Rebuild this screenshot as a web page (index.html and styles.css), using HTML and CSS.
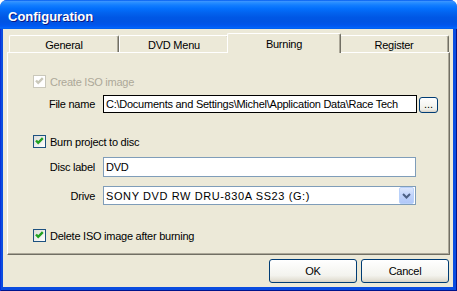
FILE: index.html
```html
<!DOCTYPE html>
<html lang="en">
<head>
    <meta charset="UTF-8">
    <title>Configuration</title>
    <link rel="stylesheet" href="styles.css">
</head>
<body>
<div class="window">
    <div class="titlebar"><span class="title">Configuration</span></div>
    <div class="frame">
        <div class="client">
            <div class="tabs">
                <div class="tab">General</div>
                <div class="tab">DVD Menu</div>
                <div class="tab active">Burning</div>
                <div class="tab">Register</div>
            </div>
            <div class="panel">
                <div class="check disabled row-iso">
                    <span class="box"><svg width="11" height="11" viewBox="0 0 11 11"><path d="M2 4.5 L4.2 6.8 L8.8 2.2" fill="none" stroke="#CAC8BB" stroke-width="2.4"/></svg></span>
                    <span class="check-text">Create ISO image</span>
                </div>
                <div class="field row-file">
                    <span class="label">File name</span>
                    <div class="input readonly">C:\Documents and Settings\Michel\Application Data\Race Tech</div>
                    <button class="browse">...</button>
                </div>
                <div class="check row-burn">
                    <span class="box"><svg width="11" height="11" viewBox="0 0 11 11"><path d="M2 4.5 L4.2 6.8 L8.8 2.2" fill="none" stroke="#21A121" stroke-width="2.4"/></svg></span>
                    <span class="check-text">Burn project to disc</span>
                </div>
                <div class="field row-label">
                    <span class="label">Disc label</span>
                    <div class="input">DVD</div>
                </div>
                <div class="field row-drive">
                    <span class="label">Drive</span>
                    <div class="input combo">
                        <span class="combo-text">SONY DVD RW DRU-830A SS23 (G:)</span>
                        <span class="combo-btn"><svg width="9" height="6" viewBox="0 0 9 6"><path d="M1 1 L4.5 4.5 L8 1" fill="none" stroke="#4D6185" stroke-width="2"/></svg></span>
                    </div>
                </div>
                <div class="check row-delete">
                    <span class="box"><svg width="11" height="11" viewBox="0 0 11 11"><path d="M2 4.5 L4.2 6.8 L8.8 2.2" fill="none" stroke="#21A121" stroke-width="2.4"/></svg></span>
                    <span class="check-text">Delete ISO image after burning</span>
                </div>
            </div>
            <div class="buttons">
                <button class="btn">OK</button>
                <button class="btn">Cancel</button>
            </div>
        </div>
    </div>
</div>
</body>
</html>
```

FILE: styles.css
```css
body {
    margin: 0;
    background-color: #ffffff;
    font-family: "Liberation Sans", Arial, sans-serif;
    font-size: 11px;
    letter-spacing: -0.25px;
    color: #000000;
}

.window {
    width: 457px;
    height: 291px;
    display: flex;
    flex-direction: column;
    border-radius: 7px 7px 0 0;
    overflow: hidden;
    background-color: #0A4CE0;
}

.titlebar {
    height: 29px;
    box-sizing: border-box;
    padding: 3px 0 0 8px;
    display: flex;
    align-items: center;
    background: linear-gradient(to bottom, #0058EE 0%, #3A93FF 5%, #288EFF 9%, #127DFF 18%, #036FFC 30%, #0262EE 45%, #0057E5 60%, #0054E3 75%, #0055EB 85%, #005BF5 92%, #026AFE 97%, #0054E0 100%);
}

.title {
    color: #ffffff;
    font-weight: bold;
    font-size: 13px;
    letter-spacing: 0;
    text-shadow: 1px 1px #0A1883;
}

.frame {
    flex: 1;
    display: flex;
    padding: 0 4px 4px 3px;
    background-color: #0A4CE0;
    box-shadow: inset 1px 0 #0831D9, inset -1px 0 #00138C, inset 0 -1px #00138C;
}

.client {
    flex: 1;
    display: flex;
    flex-direction: column;
    background-color: #ECE9D8;
}

/* tab strip */
.tabs {
    display: flex;
    align-items: flex-end;
    height: 19px;
    margin-top: 4px;
    padding-left: 6px;
    position: relative;
    z-index: 1;
}

.tab {
    width: 110px;
    height: 17px;
    box-sizing: border-box;
    padding-top: 2px;
    display: flex;
    align-items: center;
    justify-content: center;
    background-color: #ECE9D8;
    border-top: 1px solid #ffffff;
    border-left: 1px solid #ffffff;
    border-right: 1px solid #716F64;
    border-radius: 2px 2px 0 0;
    box-shadow: inset -1px 0 #ACA899;
}

.tab.active {
    width: 114px;
    height: 20px;
    padding-top: 0;
    margin: 0 -2px -1px;
    position: relative;
    z-index: 2;
}

.panel {
    height: 203px;
    margin: 0 3px 0 4px;
    box-sizing: border-box;
    padding: 22px 0 0 25px;
    border: 1px solid;
    border-color: #ffffff #716F64 #716F64 #ffffff;
    box-shadow: inset -1px -1px #ACA899;
}

/* checkboxes */
.check {
    display: flex;
    align-items: center;
    height: 13px;
}

.box {
    width: 13px;
    height: 13px;
    box-sizing: border-box;
    margin-right: 4px;
    border: 1px solid #1C5180;
    background: linear-gradient(135deg, #DCDCD7, #ffffff);
}

.box svg {
    display: block;
}

.check.disabled .box {
    border-color: #CAC8BB;
    background: #ffffff;
}

.check.disabled .check-text {
    color: #ACA899;
}

/* label + input rows */
.field {
    display: flex;
    align-items: stretch;
}

.label {
    width: 62px;
    margin-right: 8px;
    display: flex;
    align-items: center;
    justify-content: flex-end;
}

.input {
    width: 313px;
    box-sizing: border-box;
    padding-left: 2px;
    display: flex;
    align-items: center;
    white-space: nowrap;
    overflow: hidden;
    background-color: #ffffff;
    border: 1px solid #7F9DB9;
}

.input.readonly {
    width: 314px;
    border-color: #000000;
}

.row-iso { margin-top: 0; }
.row-file { margin-top: 7px; height: 18px; }
.row-burn { margin-top: 22px; }
.row-label { margin-top: 9px; height: 20px; }
.row-drive { margin-top: 9px; height: 19px; }
.row-delete { margin-top: 24px; }

.browse {
    align-self: flex-end;
    width: 19px;
    height: 16px;
    margin-left: 2px;
    padding: 0 0 3px;
    font-family: inherit;
    font-size: 11px;
    line-height: 10px;
    border: 1px solid #003C74;
    border-radius: 3px;
    background: linear-gradient(to bottom, #ffffff, #F0F0EA 80%, #D6D0C5);
}

.combo {
    padding-right: 1px;
}

.combo-text {
    flex: 1;
    letter-spacing: 0.6px;
}

.combo-btn {
    width: 15px;
    height: 17px;
    box-sizing: border-box;
    display: flex;
    align-items: center;
    justify-content: center;
    border: 1px solid #B9D1FA;
    border-radius: 2px;
    background: linear-gradient(to bottom, #DCE7FD, #C1D3FB 50%, #B0C8F8);
}

/* bottom buttons */
.buttons {
    display: flex;
    justify-content: flex-end;
    gap: 4px;
    margin-top: 4px;
    padding-right: 4px;
}

.btn {
    width: 88px;
    height: 24px;
    font-family: inherit;
    font-size: 11px;
    letter-spacing: -0.25px;
    color: #000000;
    border: 1px solid #003C74;
    border-radius: 3px;
    background: linear-gradient(to bottom, #ffffff, #F3F3EE 70%, #E4E1D6 90%, #D6D0C5);
}
```
